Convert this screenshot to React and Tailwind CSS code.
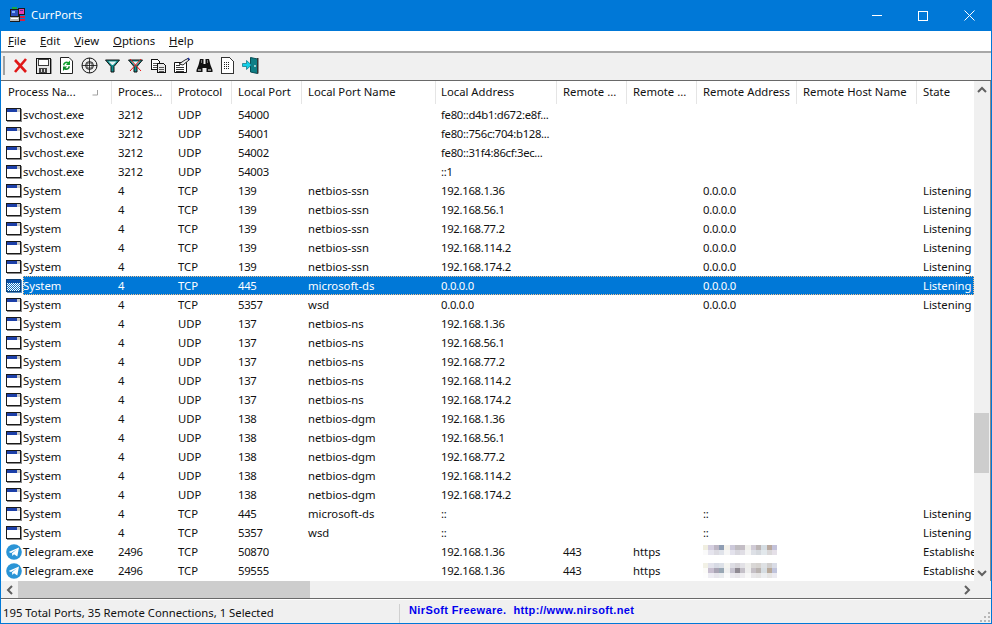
const rowGrid = "grid grid-cols-[111px_60px_60px_70px_134px_121px_70px_70px_100px_120px_57px]";

const headers = ["Process Na...", "Proces...", "Protocol", "Local Port", "Local Port Name", "Local Address", "Remote ...", "Remote ...", "Remote Address", "Remote Host Name", "State"];

const sys = (proto, port, name, addr, remote, state) => ({ p: "System", pid: "4", proto, port, name, addr, remote, state });

const rows = [
  { p: "svchost.exe", pid: "3212", proto: "UDP", port: "54000", addr: "fe80::d4b1:d672:e8f..." },
  { p: "svchost.exe", pid: "3212", proto: "UDP", port: "54001", addr: "fe80::756c:704:b128..." },
  { p: "svchost.exe", pid: "3212", proto: "UDP", port: "54002", addr: "fe80::31f4:86cf:3ec..." },
  { p: "svchost.exe", pid: "3212", proto: "UDP", port: "54003", addr: "::1" },
  sys("TCP", "139", "netbios-ssn", "192.168.1.36", "0.0.0.0", "Listening"),
  sys("TCP", "139", "netbios-ssn", "192.168.56.1", "0.0.0.0", "Listening"),
  sys("TCP", "139", "netbios-ssn", "192.168.77.2", "0.0.0.0", "Listening"),
  sys("TCP", "139", "netbios-ssn", "192.168.114.2", "0.0.0.0", "Listening"),
  sys("TCP", "139", "netbios-ssn", "192.168.174.2", "0.0.0.0", "Listening"),
  { ...sys("TCP", "445", "microsoft-ds", "0.0.0.0", "0.0.0.0", "Listening"), selected: true },
  sys("TCP", "5357", "wsd", "0.0.0.0", "0.0.0.0", "Listening"),
  sys("UDP", "137", "netbios-ns", "192.168.1.36"),
  sys("UDP", "137", "netbios-ns", "192.168.56.1"),
  sys("UDP", "137", "netbios-ns", "192.168.77.2"),
  sys("UDP", "137", "netbios-ns", "192.168.114.2"),
  sys("UDP", "137", "netbios-ns", "192.168.174.2"),
  sys("UDP", "138", "netbios-dgm", "192.168.1.36"),
  sys("UDP", "138", "netbios-dgm", "192.168.56.1"),
  sys("UDP", "138", "netbios-dgm", "192.168.77.2"),
  sys("UDP", "138", "netbios-dgm", "192.168.114.2"),
  sys("UDP", "138", "netbios-dgm", "192.168.174.2"),
  sys("TCP", "445", "microsoft-ds", "::", "::", "Listening"),
  sys("TCP", "5357", "wsd", "::", "::", "Listening"),
  { p: "Telegram.exe", pid: "2496", proto: "TCP", port: "50870", addr: "192.168.1.36", rport: "443", rname: "https", blur: 0, state: "Established" },
  { p: "Telegram.exe", pid: "2496", proto: "TCP", port: "59555", addr: "192.168.1.36", rport: "443", rname: "https", blur: 1, state: "Established" },
];

const mosaics = [
  [
    ["#f0eee0", "#d5cfe0", "#bdb6c4", "#8f9db3", "#f4f1ea", "#ccc9da", "#bfbcc0", "#c3bdc5", "#f0f0ec", "#d0cbd6", "#bcb5b5", "#d5dde3", "#b9a99f", "#c3c2da"],
    ["#fafafa", "#e6e5ee", "#dcdbe2", "#e0e3ea", "#f6f6f6", "#e3e2ec", "#d8d7de", "#e0dee5", "#f4f4f4", "#dde0e6", "#d5d9de", "#e2e8ec", "#dad8d9", "#e5e0e8"],
  ],
  [
    ["#f2f1e6", "#e3e3ec", "#d7dae4", "#dce0e7", "#f4f4f0", "#dddde4", "#d6d4d9", "#e2e1e6", "#eeeeec", "#d9d7d6", "#d6d3d0", "#dee1e4", "#d0cecd", "#d9dce6"],
    ["#fbfbf8", "#c8bfd0", "#a9a5b4", "#98a7b4", "#f0f0f0", "#c6c3cf", "#8f8a92", "#c4c0c8", "#eeeeee", "#c5c0c6", "#b9b3b0", "#d6dde2", "#b8a99a", "#c0c4dc"],
    ["#fdfdfd", "#eeedf3", "#e7e6ec", "#e9ebee", "#fafafa", "#ebeaee", "#e7e5e9", "#eeedf0", "#f8f8f8", "#e8e7e9", "#e5e4e4", "#eceef0", "#e6e5e4", "#ecebf1"],
  ],
];

function Mosaic({ grid }) {
  return (
    <svg width="75" height="16" viewBox="0 0 75 16" shapeRendering="crispEdges" className="block">
      {grid.map((line, y) =>
        line.map((c, x) => <rect key={x + "-" + y} x={x * 5.3} y={y * 5} width="5.3" height="5" fill={c} />)
      )}
    </svg>
  );
}

function WindowIcon({ selected }) {
  if (selected) {
    return (
      <svg width="16" height="16" viewBox="0 0 16 16" shapeRendering="crispEdges" className="block">
        <defs>
          <pattern id="dither" width="2" height="2" patternUnits="userSpaceOnUse">
            <rect width="2" height="2" fill="#0f70c0" />
            <rect width="1" height="1" fill="#ffffff" />
            <rect x="1" y="1" width="1" height="1" fill="#ffffff" />
          </pattern>
        </defs>
        <rect x="0" y="1" width="15" height="13" fill="#0a3f78" />
        <rect x="1" y="2" width="13" height="3" fill="#0a50a8" />
        <rect x="1" y="5" width="13" height="8" fill="url(#dither)" />
        <rect x="15" y="2" width="1" height="13" fill="#5a8fc0" />
        <rect x="1" y="14" width="15" height="1" fill="#5a8fc0" />
      </svg>
    );
  }
  return (
    <svg width="16" height="16" viewBox="0 0 16 16" shapeRendering="crispEdges" className="block">
      <rect x="0" y="1" width="15" height="13" fill="#1a1a1a" />
      <rect x="15" y="2" width="1" height="13" fill="#8a8a8a" />
      <rect x="1" y="14" width="15" height="1" fill="#8a8a8a" />
      <rect x="1" y="2" width="13" height="3" fill="#1c3fa8" />
      <rect x="11" y="2" width="3" height="3" fill="#c8c8c8" />
      <rect x="1" y="5" width="13" height="8" fill="#ffffff" />
    </svg>
  );
}

function TelegramIcon() {
  return (
    <svg width="16" height="16" viewBox="0 0 16 16" className="block">
      <circle cx="8" cy="8" r="7.8" fill="#2a94d6" />
      <path d="M2.6 8 L13 3.6 L11.3 12.6 L8 10.3 L6.4 12 L6 9.2 L10.8 5.6 L5 8.9 Z" fill="#ffffff" />
    </svg>
  );
}

function AppIcon() {
  return (
    <svg width="17" height="17" viewBox="0 0 17 17" shapeRendering="crispEdges" className="block">
      <rect x="3" y="0" width="5" height="2" fill="#18a84a" />
      <rect x="1" y="2" width="9" height="8" fill="#1a1a1a" />
      <rect x="2" y="3" width="7" height="6" fill="#2c4fc0" />
      <rect x="3" y="4" width="3" height="2" fill="#7fb0ff" />
      <rect x="9" y="1" width="7" height="7" fill="#1a1a1a" />
      <rect x="10" y="2" width="5" height="5" fill="#e23fb0" />
      <rect x="11" y="3" width="3" height="1" fill="#6b1f8f" />
      <rect x="1" y="10" width="9" height="4" fill="#b8b8b8" />
      <rect x="2" y="11" width="7" height="1" fill="#ffffff" />
      <rect x="1" y="14" width="10" height="1" fill="#1a1a1a" />
      <rect x="11" y="9" width="5" height="2" fill="#d81f3f" />
      <rect x="11" y="12" width="5" height="2" fill="#d81f3f" />
      <rect x="10" y="8" width="1" height="7" fill="#1a1a1a" />
    </svg>
  );
}

const toolIcons = [
  <g key="x">
    <path d="M3 3 L14 15 M14 2 L3 15" stroke="#e01818" strokeWidth="2.6" fill="none" />
  </g>,
  <g key="save" shapeRendering="crispEdges">
    <path d="M1 1 H15 V16 H1 Z" fill="#e8e8e8" stroke="#111" />
    <rect x="3" y="2" width="10" height="6" fill="#fff" stroke="#111" strokeWidth="0.8" />
    <rect x="4" y="11" width="8" height="5" fill="#444" />
    <rect x="6" y="12" width="1" height="3" fill="#ddd" />
    <rect x="9" y="12" width="1" height="3" fill="#ddd" />
    <rect x="16" y="2" width="1" height="15" fill="#999" />
  </g>,
  <g key="refresh">
    <path d="M2.5 0.5 H11 L14.5 4 V16.5 H2.5 Z" fill="#fff" stroke="#222" />
    <path d="M5 8 A3.6 3.6 0 0 1 10.5 5 L12 3.5 V8 H7.8 L9.5 6.5 A2 2 0 0 0 6.5 8.5 Z" fill="#12a030" />
    <path d="M12 9.5 A3.6 3.6 0 0 1 6.5 12.5 L5 14 V9.5 H9.2 L7.5 11 A2 2 0 0 0 10.5 9 Z" fill="#0c8a28" />
  </g>,
  <g key="target" fill="none" stroke="#111">
    <circle cx="8.5" cy="8.5" r="7.5" strokeWidth="1" />
    <circle cx="8.5" cy="8.5" r="4" strokeWidth="0.8" />
    <path d="M8.5 1 V16 M1 8.5 H16" strokeWidth="0.8" />
    <path d="M6 6 H11 V11 H6 Z" strokeWidth="0.7" />
  </g>,
  <g key="filter">
    <path d="M1.5 3 H15.5 L10 9.5 V15 L7 15 V9.5 Z" fill="#0f8f8f" stroke="#111" strokeWidth="1" />
    <path d="M4.5 4.5 H12.5 L9 8 H8 Z" fill="#e8f4f4" />
  </g>,
  <g key="filterx">
    <path d="M1.5 3 H15.5 L10 9.5 V15 L7 15 V9.5 Z" fill="#0f8f8f" stroke="#111" strokeWidth="1" />
    <path d="M4.5 4.5 H12.5 L9 8 H8 Z" fill="#e8f4f4" />
    <path d="M3 2 L14 14 M14 2 L3 14" stroke="#e81818" strokeWidth="1" />
  </g>,
  <g key="copy" shapeRendering="crispEdges">
    <path d="M1.5 2.5 H7.5 L9.5 4.5 V12.5 H1.5 Z" fill="#fff" stroke="#111" />
    <path d="M3 6 H8 M3 8 H8 M3 10 H8" stroke="#555" />
    <path d="M7.5 6.5 H13.5 L15.5 8.5 V15.5 H7.5 Z" fill="#e8e8e8" stroke="#111" />
    <path d="M9 10 H14 M9 12 H14 M9 14 H14" stroke="#555" />
  </g>,
  <g key="props">
    <path d="M1.5 5.5 H13.5 V15.5 H1.5 Z" fill="#fff" stroke="#111" />
    <path d="M3 8 H7 M3 10 H11 M3 12 H11 M3 14 H11" stroke="#333" shapeRendering="crispEdges" />
    <path d="M6 7 L12 3 L15 1.5 L16 3 L10 8 Z" fill="#eee" stroke="#111" strokeWidth="0.9" />
    <path d="M15 1 L16.5 3" stroke="#1c2f9a" strokeWidth="1.5" />
  </g>,
  <g key="binoc" fill="#111">
    <path d="M4 2 H7.5 V7 H9.5 V2 H13 L14.5 8 L16.5 13 V15 H10.5 V11 H6.5 V15 H0.5 V13 L2.5 8 Z" />
    <rect x="2" y="12" width="3" height="2" fill="#888" />
    <rect x="12" y="12" width="3" height="2" fill="#888" />
    <rect x="5" y="3" width="1" height="3" fill="#777" />
    <rect x="11" y="3" width="1" height="3" fill="#777" />
  </g>,
  <g key="doc" shapeRendering="crispEdges">
    <path d="M2.5 0.5 H10.5 L14.5 4.5 V16.5 H2.5 Z" fill="#fff" stroke="#333" />
    <path d="M5 5 H6 M7 5 H8 M9 5 H10 M5 7 H6 M7 7 H8 M9 7 H10 M5 9 H6 M7 9 H8 M9 9 H10 M5 11 H6 M7 11 H8 M9 11 H10" stroke="#222" />
  </g>,
  <g key="exit">
    <path d="M8.5 0.5 L15.5 2 V16.5 L8.5 15 Z" fill="#0e7f86" stroke="#0a4f55" />
    <rect x="15" y="1" width="1.5" height="15.5" fill="#333" />
    <circle cx="13" cy="9" r="0.9" fill="#d8f0f0" />
    <path d="M0.5 6.5 H4.5 V3.5 L9.5 8 L4.5 12.5 V9.5 H0.5 Z" fill="#12d0e8" stroke="#0a6f80" strokeWidth="0.7" />
  </g>,
];

function Chevron({ d }) {
  return (
    <svg width="10" height="10" viewBox="0 0 10 10" className="block">
      <path d={d} fill="none" stroke="#606060" strokeWidth="2" />
    </svg>
  );
}

function Row({ r }) {
  const c = r.selected ? "text-white" : "text-[#111]";
  return (
    <div className={`${rowGrid} h-[19px] items-center whitespace-nowrap leading-[19px] ${c}`}>
      <div className="flex items-center h-[19px] pl-[5px]">
        <div className="w-[16px] shrink-0">
          {r.p === "Telegram.exe" ? <TelegramIcon /> : <WindowIcon selected={r.selected} />}
        </div>
        <span className="pl-[1px]">{r.p}</span>
      </div>
      <div className="pl-[6px] tracking-[-0.3px]">{r.pid}</div>
      <div className="pl-[6px]">{r.proto}</div>
      <div className="pl-[6px] tracking-[-0.3px]">{r.port}</div>
      <div className="pl-[6px]">{r.name}</div>
      <div className="pl-[5px] tracking-[-0.3px] overflow-hidden">{r.addr}</div>
      <div className="pl-[6px] tracking-[-0.3px]">{r.rport}</div>
      <div className="pl-[6px]">{r.rname}</div>
      <div className="pl-[6px] h-[19px] overflow-hidden tracking-[-0.3px]">
        {r.blur === 0 && <div className="pt-[3px]"><Mosaic grid={mosaics[0]} /></div>}
        {r.blur === 1 && <div className="pt-[2px]"><Mosaic grid={mosaics[1]} /></div>}
        {r.blur === undefined && r.remote}
      </div>
      <div />
      <div className="pl-[6px] overflow-hidden">{r.state}</div>
    </div>
  );
}

export default function App() {
  return (
    <div className="w-[992px] h-[624px] flex flex-col bg-[#f0f0f0] border border-t-0 border-[#0078d7] font-['Noto_Sans',sans-serif] text-[11.3px] overflow-hidden">
      {/* title bar */}
      <div className="h-[31px] shrink-0 bg-[#0078d7] flex items-center text-white -mx-[1px]">
        <div className="pl-[9px] pr-[5px]"><AppIcon /></div>
        <span>CurrPorts</span>
        <div className="ml-auto flex">
          <div className="w-[46px] h-[31px] flex items-center justify-center">
            <div className="w-[10px] h-[1px] bg-white" />
          </div>
          <div className="w-[46px] h-[31px] flex items-center justify-center">
            <div className="w-[10px] h-[10px] border border-white" />
          </div>
          <div className="w-[46px] h-[31px] flex items-center justify-center">
            <svg width="11" height="11" viewBox="0 0 11 11"><path d="M0.5 0.5 L10.5 10.5 M10.5 0.5 L0.5 10.5" stroke="#fff" strokeWidth="1" /></svg>
          </div>
        </div>
      </div>

      {/* menu */}
      <div className="h-[20px] shrink-0 bg-white flex items-center gap-[14px] pl-[7px] text-[#111]">
        {["File", "Edit", "View", "Options", "Help"].map((m) => (
          <span key={m}><span className="underline">{m[0]}</span>{m.slice(1)}</span>
        ))}
      </div>

      {/* toolbar */}
      <div className="h-[30px] shrink-0 border-t-2 border-t-[#a8a8a8] border-b border-b-[#696969] bg-[#f0f0f0] flex items-center pl-[2px] pb-[3px]">
        <div className="w-[2px] h-[19px] bg-[#a0a0a0] mr-[4px]" />
        {toolIcons.map((icon, i) => (
          <div key={i} className="w-[23px] h-[20px] flex items-center justify-center">
            <svg width="17" height="17" viewBox="0 0 17 17" className="block">{icon}</svg>
          </div>
        ))}
      </div>

      {/* list */}
      <div className="flex-1 min-h-0 flex flex-col bg-[#f0f0f0]">
        <div className="flex-1 min-h-0 flex border-r border-r-[#8a8a8a]">
          <div className="w-[973px] bg-white overflow-hidden">
            <div className={`${rowGrid} h-[24px] bg-white text-[#111] whitespace-nowrap`}>
              {headers.map((h, i) => (
                <div key={i} className={`relative h-[23px] flex items-center overflow-hidden ${i === 0 ? "pl-[7px]" : i === 5 ? "pl-[5px]" : "pl-[6px]"} ${i === 10 ? "" : "border-r border-r-[#e5e5e5]"}`}>
                  {h}
                  {i === 0 && (
                    <svg width="7" height="7" viewBox="0 0 7 7" className="absolute right-[12px] top-[8px]">
                      <path d="M0.5 6 H5.5 V1" fill="none" stroke="#a0a0a0" />
                    </svg>
                  )}
                </div>
              ))}
            </div>
            {rows.map((r, i) => (
              <div key={i} className="relative">
                {r.selected && (
                  <div className="absolute left-[22px] right-0 top-0 h-[19px] bg-[#0078d7] border border-dotted border-[#f0c090]" />
                )}
                <div className="relative"><Row r={r} /></div>
              </div>
            ))}
          </div>
          <div className="flex-1 flex flex-col items-stretch justify-between">
            <div className="h-[17px] flex items-center justify-center"><Chevron d="M1 7 L5 3 L9 7" /></div>
            <div className="flex-1 flex flex-col pt-[315px]">
              <div className="h-[60px] w-[15px] bg-[#cdcdcd]" />
            </div>
            <div className="h-[17px] flex items-center justify-center"><Chevron d="M1 3 L5 7 L9 3" /></div>
          </div>
        </div>
        <div className="h-[18px] shrink-0 flex items-center border-b border-b-[#696969]">
          <div className="w-[17px] flex justify-center pl-[1px]"><Chevron d="M7 1 L3 5 L7 9" /></div>
          <div className="w-[292px] h-[17px] bg-[#cdcdcd]" />
          <div className="ml-auto w-[33px] flex justify-start pl-[4px]"><Chevron d="M3 1 L7 5 L3 9" /></div>
        </div>
      </div>

      {/* status bar */}
      <div className="h-[24px] shrink-0 flex items-center relative border-t border-t-white text-[#111]">
        <div className="w-[399px] h-[20px] flex items-center pl-[2px] border-r border-r-[#d0d0d0] mt-[4px] whitespace-nowrap">
          195 Total Ports, 35 Remote Connections, 1 Selected
        </div>
        <div className="pl-[9px] mb-[2px] font-['Liberation_Sans',sans-serif] font-bold text-[11px] text-[#0000ee] whitespace-pre tracking-[0.38px]">
          {"NirSoft Freeware.  http://www.nirsoft.net"}
        </div>
        <svg width="11" height="11" viewBox="0 0 11 11" className="absolute right-0 bottom-[1px]" shapeRendering="crispEdges">
          <path d="M8 1 h2 v2 h-2 Z M4 5 h2 v2 h-2 Z M8 5 h2 v2 h-2 Z M0 9 h2 v2 h-2 Z M4 9 h2 v2 h-2 Z M8 9 h2 v2 h-2 Z" fill="#b8b8b8" />
        </svg>
      </div>
    </div>
  );
}
